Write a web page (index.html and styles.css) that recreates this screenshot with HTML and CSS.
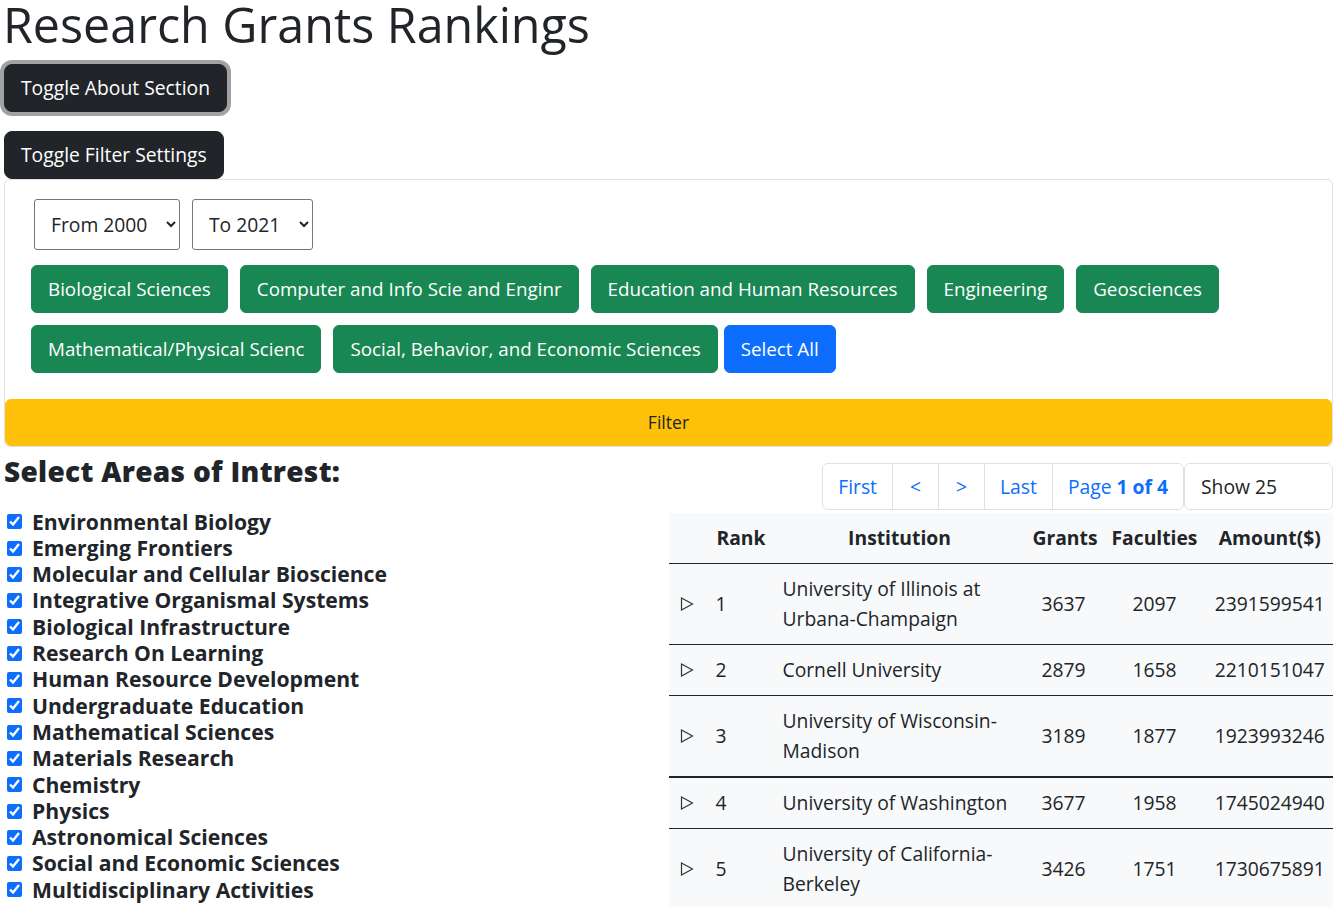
FILE: index.html
```html
<!DOCTYPE html>
<html lang="en">
<head>
<meta charset="utf-8">
<title>Research Grants Rankings</title>
<link rel="stylesheet" href="styles.css">
</head>
<body>
<div class="page">
  <h1 class="title">Research Grants Rankings</h1>
  <div class="about-wrap"><button class="btn btn-dark btn-focus">Toggle About Section</button></div>
  <div><button class="btn btn-dark">Toggle Filter Settings</button></div>
  <div class="card">
    <div class="card-body">
      <div class="years">
        <select class="year-select"><option>From 2000</option></select>
        <select class="year-select"><option>To 2021</option></select>
      </div>
      <div class="areas">
        <button class="btn btn-success">Biological Sciences</button>
        <button class="btn btn-success">Computer and Info Scie and Enginr</button>
        <button class="btn btn-success">Education and Human Resources</button>
        <button class="btn btn-success">Engineering</button>
        <button class="btn btn-success">Geosciences</button>
        <button class="btn btn-success">Mathematical/Physical Scienc</button>
        <button class="btn btn-success">Social, Behavior, and Economic Sciences</button>
        <button class="btn btn-primary select-all">Select All</button>
      </div>
    </div>
    <button class="btn-filter">Filter</button>
  </div>
  <div class="main-row">
    <div class="left-col">
      <h3 class="interest-title">Select Areas of Intrest:</h3>
      <ul class="interest-list">
        <li><input type="checkbox" checked><span>Environmental Biology</span></li>
        <li><input type="checkbox" checked><span>Emerging Frontiers</span></li>
        <li><input type="checkbox" checked><span>Molecular and Cellular Bioscience</span></li>
        <li><input type="checkbox" checked><span>Integrative Organismal Systems</span></li>
        <li><input type="checkbox" checked><span>Biological Infrastructure</span></li>
        <li><input type="checkbox" checked><span>Research On Learning</span></li>
        <li><input type="checkbox" checked><span>Human Resource Development</span></li>
        <li><input type="checkbox" checked><span>Undergraduate Education</span></li>
        <li><input type="checkbox" checked><span>Mathematical Sciences</span></li>
        <li><input type="checkbox" checked><span>Materials Research</span></li>
        <li><input type="checkbox" checked><span>Chemistry</span></li>
        <li><input type="checkbox" checked><span>Physics</span></li>
        <li><input type="checkbox" checked><span>Astronomical Sciences</span></li>
        <li><input type="checkbox" checked><span>Social and Economic Sciences</span></li>
        <li><input type="checkbox" checked><span>Multidisciplinary Activities</span></li>
      </ul>
    </div>
    <div class="right-col">
      <div class="pager-row">
        <ul class="pagination">
          <li class="page-item">First</li>
          <li class="page-item page-arrow">&lt;</li>
          <li class="page-item page-arrow">&gt;</li>
          <li class="page-item">Last</li>
          <li class="page-item">Page <strong>1 of 4</strong></li>
        </ul>
        <div class="show-select">Show 25</div>
      </div>
      <table class="rank-table">
        <colgroup>
          <col class="c-toggle"><col class="c-rank"><col class="c-inst"><col class="c-grants"><col class="c-fac"><col>
        </colgroup>
        <thead>
          <tr><th></th><th>Rank</th><th>Institution</th><th>Grants</th><th>Faculties</th><th>Amount($)</th></tr>
        </thead>
        <tbody>
          <tr>
            <td class="tog"><svg class="tri" width="14" height="14" viewBox="0 0 14 14"><polygon points="1.5,1 12.5,7 1.5,13" /></svg></td>
            <td class="left">1</td><td class="left">University of Illinois at Urbana-Champaign</td><td>3637</td><td>2097</td><td>2391599541</td>
          </tr>
          <tr>
            <td class="tog"><svg class="tri" width="14" height="14" viewBox="0 0 14 14"><polygon points="1.5,1 12.5,7 1.5,13" /></svg></td>
            <td class="left">2</td><td class="left">Cornell University</td><td>2879</td><td>1658</td><td>2210151047</td>
          </tr>
          <tr>
            <td class="tog"><svg class="tri" width="14" height="14" viewBox="0 0 14 14"><polygon points="1.5,1 12.5,7 1.5,13" /></svg></td>
            <td class="left">3</td><td class="left">University of Wisconsin-Madison</td><td>3189</td><td>1877</td><td>1923993246</td>
          </tr>
          <tr class="thick">
            <td class="tog"><svg class="tri" width="14" height="14" viewBox="0 0 14 14"><polygon points="1.5,1 12.5,7 1.5,13" /></svg></td>
            <td class="left">4</td><td class="left">University of Washington</td><td>3677</td><td>1958</td><td>1745024940</td>
          </tr>
          <tr>
            <td class="tog"><svg class="tri" width="14" height="14" viewBox="0 0 14 14"><polygon points="1.5,1 12.5,7 1.5,13" /></svg></td>
            <td class="left">5</td><td class="left">University of California-Berkeley</td><td>3426</td><td>1751</td><td>1730675891</td>
          </tr>
        </tbody>
      </table>
    </div>
  </div>
</div>
</body>
</html>
```

FILE: styles.css
```css
html {
  scrollbar-width: none;
}
body {
  margin: 0;
  font-family: "Open Sans", "Noto Sans", sans-serif;
  color: #212529;
  background: #fff;
}
.page {
  padding: 0 1px 0 4px;
}
.title {
  font-size: 48.4px;
  font-weight: 500;
  line-height: 48px;
  margin: 0 0 16px -1px;
}
.btn {
  font-family: inherit;
  font-size: 19.3px;
  line-height: 30px;
  padding: 8px 16px;
  border: 1px solid transparent;
  border-radius: 8px;
  cursor: pointer;
}
.btn-dark {
  background: #212529;
  border-color: #212529;
  color: #fff;
}
.btn-focus {
  box-shadow: 0 0 0 4px rgba(66, 70, 73, 0.5);
}
.about-wrap {
  margin-bottom: 19px;
}
.card {
  border: 1px solid #dee2e6;
  border-radius: 6px;
}
.card-body {
  padding: 19px 20px 20px 20px;
}
.years {
  display: flex;
  gap: 12px;
  margin-left: 9px;
}
.year-select {
  font-family: inherit;
  font-size: 19.3px;
  height: 51px;
  padding: 0 15px 0 12px;
  border: 1px solid #767676;
  border-radius: 3px;
  background: #fff;
  color: #212529;
}
.areas {
  display: flex;
  flex-wrap: wrap;
  margin-top: 9px;
}
.btn-success,
.btn-primary {
  font-size: 18.8px;
  border-radius: 6px;
  color: #fff;
}
.btn-success {
  background: #198754;
  border-color: #198754;
  margin: 6px;
}
.btn-primary {
  background: #0d6efd;
  border-color: #0d6efd;
}
.select-all {
  margin: 6px 6px 6px 0;
}
.btn-filter {
  display: block;
  width: 100%;
  font-family: inherit;
  font-size: 17.6px;
  line-height: 29px;
  padding: 8px;
  background: #ffc107;
  border: 1px solid #ffc107;
  border-radius: 6px;
  color: #212529;
}
.main-row {
  display: grid;
  grid-template-columns: 1fr 1fr;
}
.interest-title {
  font-size: 28px;
  font-weight: 800;
  line-height: 33.6px;
  letter-spacing: 0.3px;
  margin: 8px 0 20px 0;
}
.interest-list {
  list-style: none;
  margin: 0;
  padding: 0 0 0 3px;
}
.interest-list li {
  display: flex;
  align-items: center;
  height: 26.3px;
  font-size: 21.15px;
  font-weight: 700;
  line-height: 26.3px;
}
.interest-list input {
  width: 15px;
  height: 15px;
  margin: 0 10px 0 0;
  accent-color: #0d6efd;
}
.pager-row {
  display: flex;
  justify-content: flex-end;
  margin: 16px 0 3px 0;
}
.pagination {
  display: flex;
  list-style: none;
  margin: 0;
  padding: 0;
}
.page-item {
  font-size: 19.3px;
  line-height: 45px;
  padding: 0 15px;
  color: #0d6efd;
  border: 1px solid #dee2e6;
  margin-left: -1px;
}
.page-item.page-arrow {
  padding: 0 17px;
}
.page-item:first-child {
  border-radius: 6px 0 0 6px;
  margin-left: 0;
}
.page-item:last-child {
  border-radius: 0 6px 6px 0;
}
.show-select {
  width: 149px;
  box-sizing: border-box;
  font-size: 19.3px;
  line-height: 45px;
  padding: 0 16px;
  border: 1px solid #dee2e6;
  border-radius: 6px;
}
.rank-table {
  width: 100%;
  table-layout: fixed;
  border-collapse: collapse;
  background: #f8f9fa;
  font-size: 19.3px;
}
.c-toggle { width: 39px; }
.c-rank { width: 67px; }
.c-inst { width: 250px; }
.c-grants { width: 78px; }
.c-fac { width: 104px; }
.rank-table th {
  font-weight: 700;
  text-align: center;
  line-height: 30px;
  padding: 10px 8px;
  border-bottom: 1px solid #212529;
}
.rank-table td {
  text-align: center;
  line-height: 30px;
  padding: 10px 8px;
  border-top: 1px solid #212529;
  vertical-align: middle;
}
.rank-table td.left {
  text-align: left;
}
.rank-table td.tog {
  padding: 10px 0 10px 11px;
  text-align: left;
}
.rank-table tr.thick td {
  border-top: 2px solid #212529;
}
.tri {
  display: block;
  fill: none;
  stroke: #333;
  stroke-width: 1.2;
}
```
